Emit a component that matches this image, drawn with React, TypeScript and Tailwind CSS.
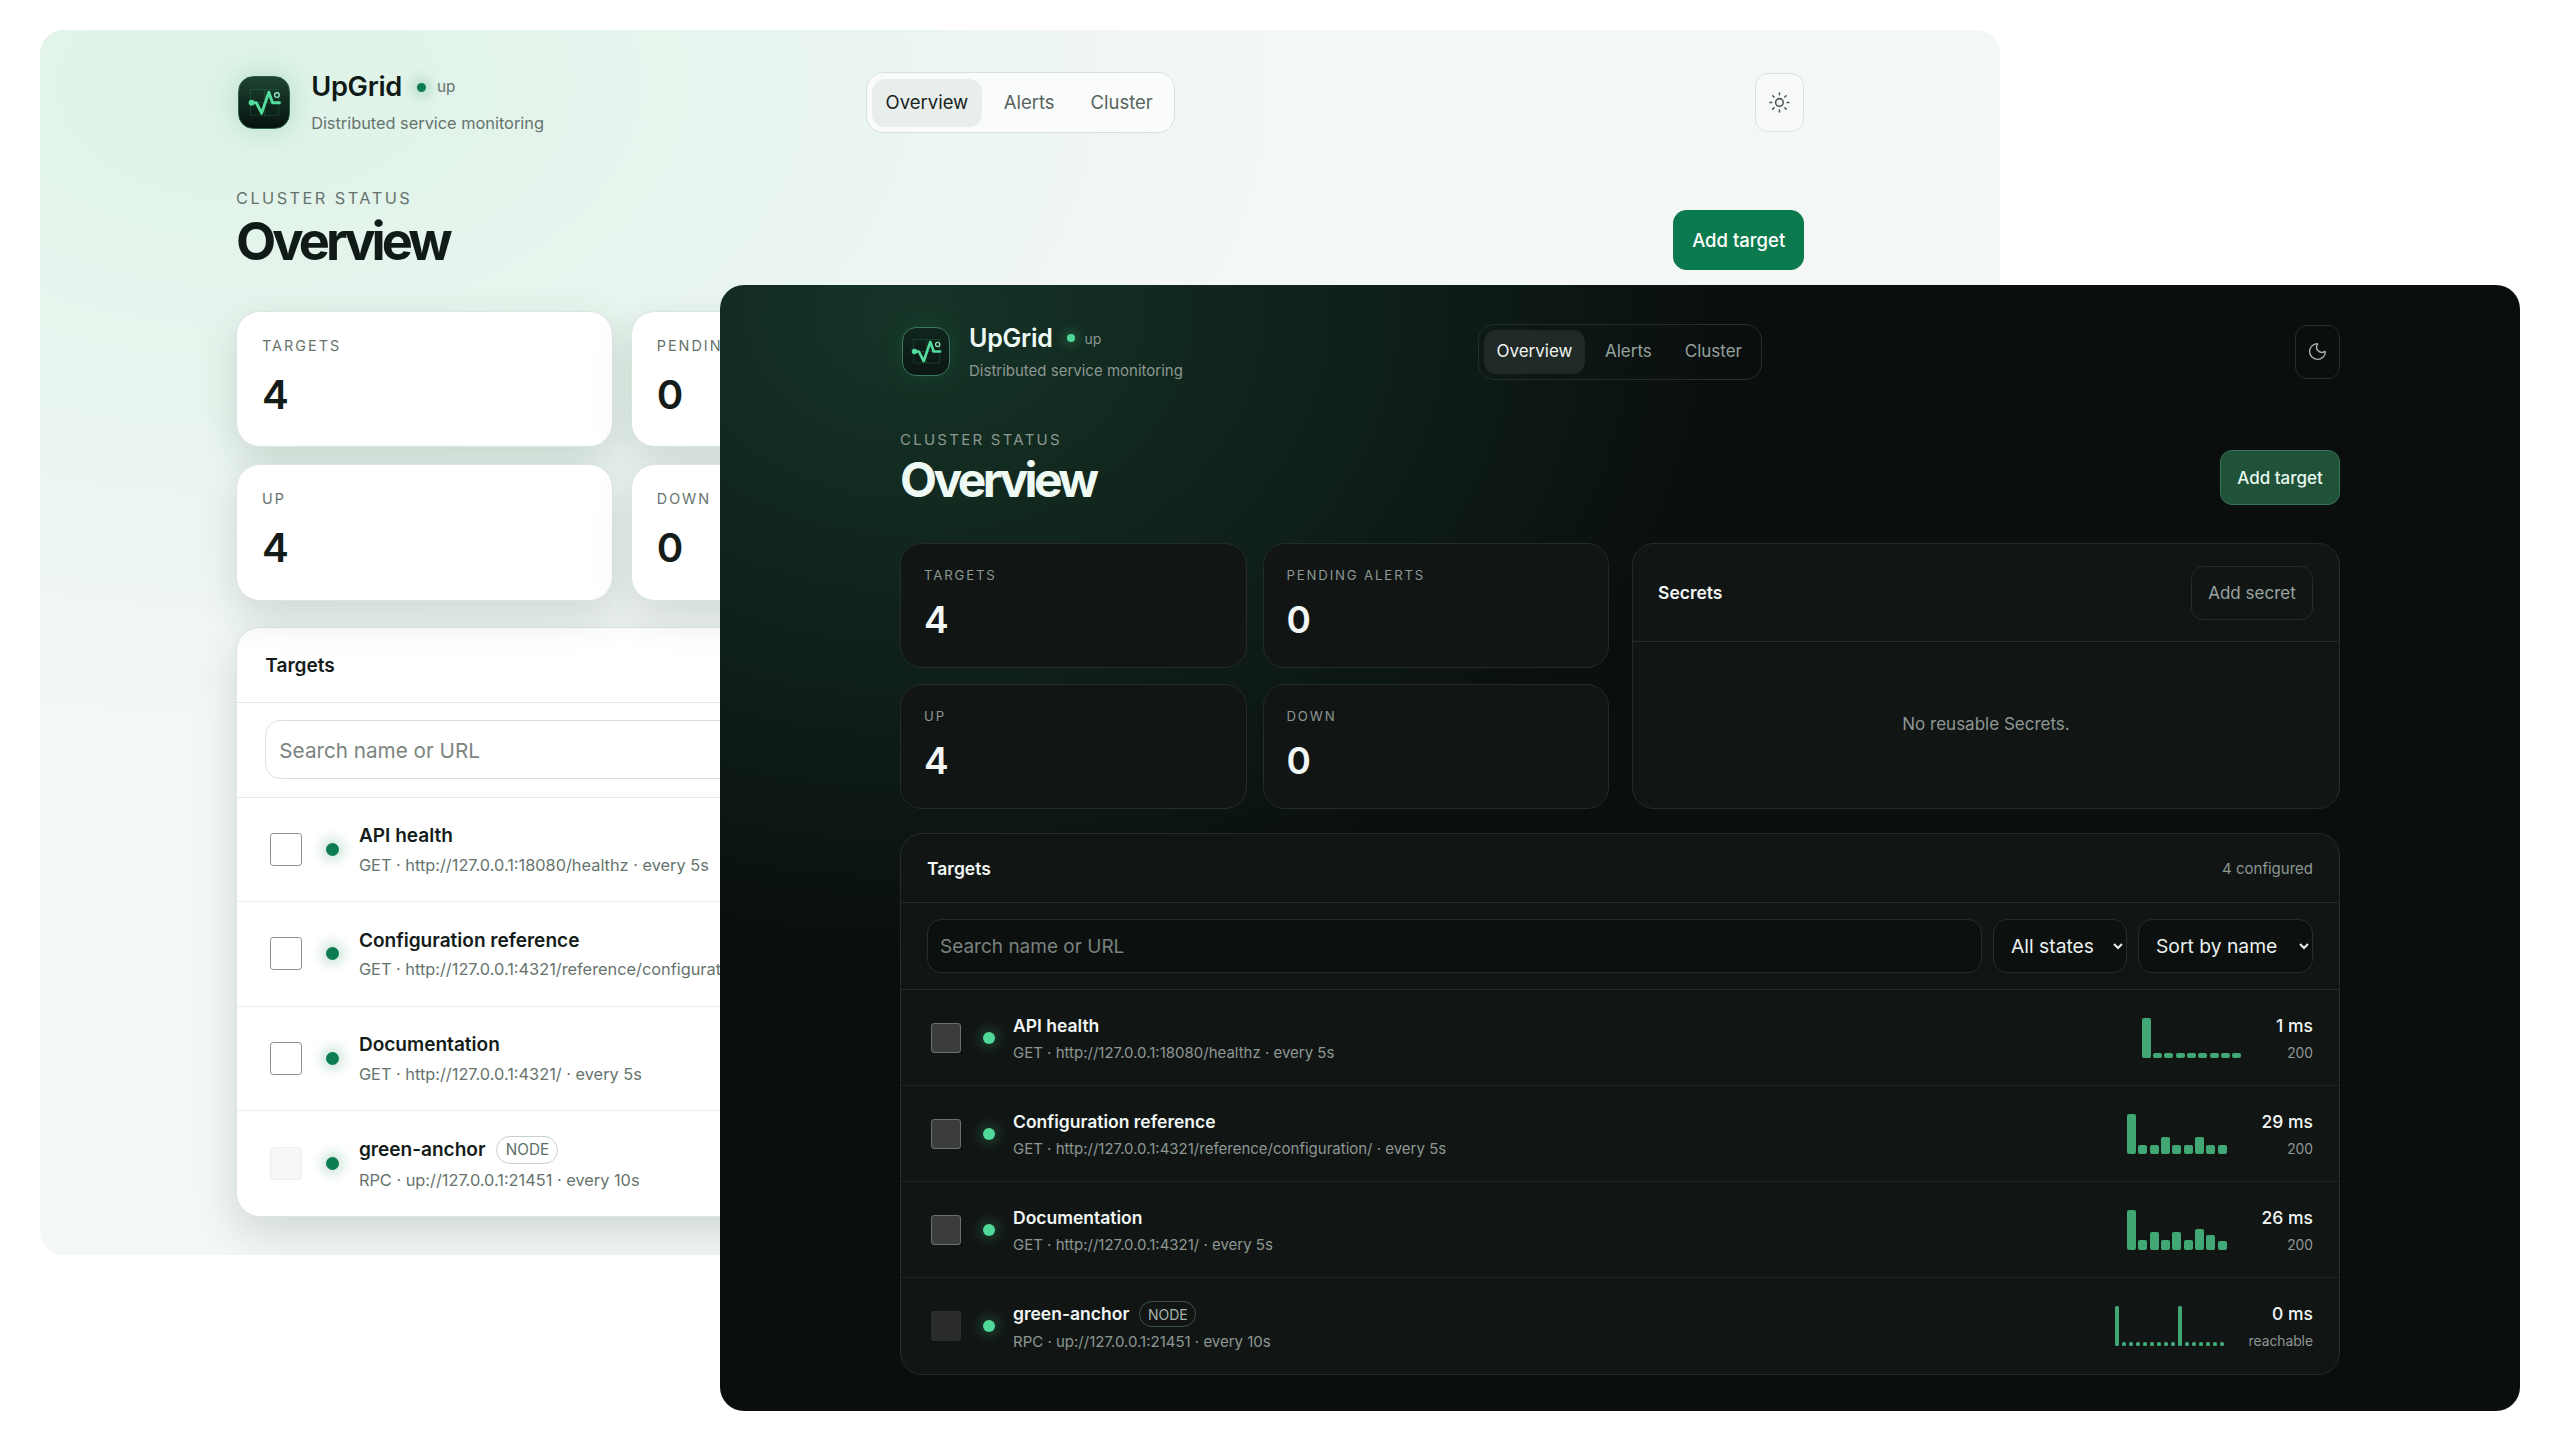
import { Moon, Sun } from "lucide-react";

type Mode = "light" | "dark";

const themes = {
  light: {
    shell: "bg-[#f3f7f5] bg-[radial-gradient(ellipse_940px_580px_at_190px_50px,#def3e8,transparent)]",
    logo: "border-[#2c5f49] bg-gradient-to-b from-[#1c4433] to-[#07130e] shadow-[0_0_26px_rgba(16,140,90,0.22)]",
    title: "text-[#101a16]",
    dot: "bg-[#0b7d50] shadow-[0_0_10px_5px_rgba(11,125,80,0.18)]",
    muted: "text-[#66736d]",
    eyebrow: "text-[#66736d]",
    nav: "border-[#d7e0dc] bg-white/70",
    navActive: "bg-[#e8eeeb] text-[#17211d]",
    navIdle: "text-[#57645e]",
    icon: "border-[#dbe2df] bg-white/40 text-[#4b5651]",
    primary: "border-[#0b7a4e] bg-[#0b7a4e] text-white",
    panel: "border-[#dde5e1] bg-white shadow-[0_14px_36px_rgba(30,60,48,0.16)]",
    line: "border-[#e2e9e6]",
    rowLine: "border-[#e9eeec]",
    strong: "text-[#141c19]",
    field: "border-[#d9e1dd] bg-white placeholder:text-[#7b8580] text-[#141c19]",
    select: "border-[#d9e1dd] bg-white text-[#141c19]",
    check: "border-[#8b8f8d] bg-white",
    checkOff: "border-[#eeeeee] bg-[#f7f7f7]",
    badge: "border-[#c4d2cb] text-[#5c6f66]",
    ghost: "border-[#dde5e1] text-[#57645e]",
    bar: "bg-[#0b7d50]",
  },
  dark: {
    shell: "bg-[#0a0f0e] bg-[radial-gradient(ellipse_820px_640px_at_190px_30px,#153427,transparent)]",
    logo: "border-[#3c7a5f] bg-gradient-to-b from-[#10261d] to-[#0b1613] shadow-[0_0_26px_rgba(60,200,140,0.12)]",
    title: "text-[#eef9f3]",
    dot: "bg-[#4fd898] shadow-[0_0_10px_5px_rgba(79,216,152,0.16)]",
    muted: "text-[#8d9793]",
    eyebrow: "text-[#8c9792]",
    nav: "border-[#262d2b] bg-transparent",
    navActive: "bg-[#212927] text-[#eef5f1]",
    navIdle: "text-[#97a19d]",
    icon: "border-[#262d2b] bg-transparent text-[#aab3af]",
    primary: "border-[#3c7058] bg-[#1f5239] text-[#e8f7ef]",
    panel: "border-[#252b2a] bg-[#111615]",
    line: "border-[#262c2b]",
    rowLine: "border-[#1f2524]",
    strong: "text-[#f2f6f4]",
    field: "border-[#262c2b] bg-[#0c1110] placeholder:text-[#79827e] text-[#f2f6f4]",
    select: "border-[#262c2b] bg-[#0c1110] text-[#eaf0ed] [color-scheme:dark]",
    check: "border-[#6d6f6e] bg-[#3b3c3c]",
    checkOff: "border-[#2f3130] bg-[#2b2c2c]",
    badge: "border-[#3b5449] text-[#a7b5ae]",
    ghost: "border-[#262c2b] text-[#9aa4a0]",
    bar: "bg-[#41a875]",
  },
};

const targets = [
  {
    name: "API health",
    sub: "GET · http://127.0.0.1:18080/healthz · every 5s",
    ms: "1 ms",
    status: "200",
    bars: [40, 5, 5, 5, 5, 5, 5, 5, 5],
  },
  {
    name: "Configuration reference",
    sub: "GET · http://127.0.0.1:4321/reference/configuration/ · every 5s",
    ms: "29 ms",
    status: "200",
    bars: [40, 9, 9, 17, 9, 9, 17, 9, 9],
  },
  {
    name: "Documentation",
    sub: "GET · http://127.0.0.1:4321/ · every 5s",
    ms: "26 ms",
    status: "200",
    bars: [40, 10, 18, 10, 18, 10, 21, 15, 9],
  },
  {
    name: "green-anchor",
    sub: "RPC · up://127.0.0.1:21451 · every 10s",
    ms: "0 ms",
    status: "reachable",
    node: true,
    bars: [40, 4, 4, 4, 4, 4, 4, 4, 4, 40, 4, 4, 4, 4, 4, 4],
  },
];

function Logo({ mode }: { mode: Mode }) {
  const t = themes[mode];
  return (
    <div className={`ml-[2px] h-[49px] w-[48px] shrink-0 overflow-hidden rounded-[14px] border ${t.logo}`}>
      <svg viewBox="0 0 48 48" className="h-full w-full" fill="none">
        <path d="M11 11.5H38M11 24H38M11 36H38M11 11.5V36M24.5 11.5V36M38 11.5V36" stroke="#4fd898" strokeOpacity="0.22" strokeWidth="0.8" />
        <path
          d="M12 24H16.5L21.6 34L28.5 14L32 24H38.7"
          stroke="#53dc9c"
          strokeWidth="2.8"
          strokeLinecap="round"
          strokeLinejoin="round"
        />
        <circle cx="12" cy="24" r="2.8" fill="#53dc9c" />
        <circle cx="36.2" cy="16.7" r="2.2" stroke="#8fe6bd" strokeWidth="1.3" />
      </svg>
    </div>
  );
}

function StatCard({ mode, label, value }: { mode: Mode; label: string; value: string }) {
  const t = themes[mode];
  return (
    <div className={`h-[125px] rounded-[22px] border px-[23px] pt-[22px] ${t.panel}`}>
      <div className={`text-[13.2px] leading-[18px] tracking-[0.14em] ${t.muted}`}>{label}</div>
      <div className={`mt-[14px] text-[37px] leading-[44px] font-semibold ${t.strong}`}>{value}</div>
    </div>
  );
}

function Spark({ mode, bars }: { mode: Mode; bars: number[] }) {
  const thin = bars.length > 9;
  const t = themes[mode];
  return (
    <div className={`flex h-[40px] items-end ${thin ? "gap-[3px]" : "gap-[2.3px]"}`}>
      {bars.map((h, i) => (
        <div
          key={i}
          className={`${thin ? "w-[4px] rounded-[1.5px]" : "w-[9px] rounded-[2px]"} ${t.bar}`}
          style={{ height: h }}
        />
      ))}
    </div>
  );
}

function Dashboard({ mode }: { mode: Mode }) {
  const t = themes[mode];
  return (
    <div className="px-[180px] pt-[38px] font-['Inter',sans-serif]">
      {/* header */}
      <div className="grid h-[56px] grid-cols-[1fr_auto_1fr] items-center">
        <div className="flex items-center gap-[19px]">
          <Logo mode={mode} />
          <div>
            <div className="flex items-center">
              <span className={`text-[25px] leading-[30px] font-semibold tracking-[-0.01em] ${t.title}`}>UpGrid</span>
              <span className={`ml-[14px] h-[8px] w-[8px] rounded-full ${t.dot}`} />
              <span className={`ml-[10px] text-[14px] ${t.muted}`}>up</span>
            </div>
            <div className={`mt-[9px] text-[15px] leading-[18px] ${t.muted}`}>Distributed service monitoring</div>
          </div>
        </div>
        <nav className={`flex h-[56px] items-center rounded-[16px] border p-[5px] pt-[6px] text-[17px] ${t.nav}`}>
          <span className={`flex h-[44px] w-[101px] items-center justify-center rounded-[12px] ${t.navActive}`}>Overview</span>
          <span className={`ml-[20px] ${t.navIdle}`}>Alerts</span>
          <span className={`ml-[33px] pr-[14px] ${t.navIdle}`}>Cluster</span>
        </nav>
        <button className={`flex h-[54px] w-[45px] items-center justify-center justify-self-end rounded-[12px] border ${t.icon}`}>
          {mode === "dark" ? <Moon size={21} strokeWidth={1.6} /> : <Sun size={21} strokeWidth={1.6} />}
        </button>
      </div>

      {/* title */}
      <div className="mt-[50px] flex items-end justify-between">
        <div className="pt-[1px]">
          <div className={`text-[15px] leading-[20px] tracking-[0.15em] ${t.eyebrow}`}>CLUSTER STATUS</div>
          <h1 className={`mt-[4px] text-[48px] leading-[51px] font-bold tracking-[-0.075em] ${t.title}`}>Overview</h1>
        </div>
        <button className={`h-[55px] w-[120px] rounded-[12px] border pt-[2px] text-[17px] font-medium ${t.primary}`}>Add target</button>
      </div>

      {/* stats + secrets */}
      <div className="mt-[38px] flex gap-[23px]">
        <div className="grid w-[709px] shrink-0 grid-cols-2 gap-x-[16px] gap-y-[16px]">
          <StatCard mode={mode} label="TARGETS" value="4" />
          <StatCard mode={mode} label="PENDING ALERTS" value="0" />
          <StatCard mode={mode} label="UP" value="4" />
          <StatCard mode={mode} label="DOWN" value="0" />
        </div>
        <div className={`flex min-w-0 flex-1 flex-col rounded-[22px] border ${t.panel}`}>
          <div className={`flex h-[98px] items-center justify-between border-b pl-[25px] pr-[26px] ${t.line}`}>
            <span className={`pt-[2px] text-[17.5px] font-semibold ${t.strong}`}>Secrets</span>
            <button className={`h-[54px] w-[122px] rounded-[12px] border pt-[2px] text-[17px] ${t.ghost}`}>Add secret</button>
          </div>
          <div className={`flex flex-1 items-center justify-center text-[17px] ${t.muted}`}>No reusable Secrets.</div>
        </div>
      </div>

      {/* targets */}
      <div className={`mt-[24px] rounded-[22px] border ${t.panel}`}>
        <div className={`flex h-[69px] items-center justify-between border-b pl-[26px] pr-[26px] ${t.line}`}>
          <span className={`pt-[2px] text-[17.5px] font-semibold ${t.strong}`}>Targets</span>
          <span className={`pt-[2px] text-[15px] ${t.muted}`}>4 configured</span>
        </div>
        <div className={`flex h-[87px] items-center gap-[11px] border-b px-[26px] ${t.line}`}>
          <input
            placeholder="Search name or URL"
            className={`h-[54px] min-w-0 flex-1 rounded-[14px] border px-[12px] pt-[1px] text-[19px] outline-none ${t.field}`}
          />
          <select className={`h-[54px] w-[134px] rounded-[14px] border pl-[13px] text-[19.3px] ${t.select}`}>
            <option>All states</option>
          </select>
          <select className={`h-[54px] w-[175px] rounded-[14px] border pl-[13px] text-[19.3px] ${t.select}`}>
            <option>Sort by name</option>
          </select>
        </div>
        {targets.map((row, i) => (
          <div
            key={row.name}
            className={`flex h-[96px] items-center pl-[30px] pr-[26px] ${i < targets.length - 1 ? `border-b ${t.rowLine}` : ""}`}
          >
            <input
              type="checkbox"
              className={`h-[30px] w-[30px] shrink-0 appearance-none rounded-[3px] border ${row.node ? t.checkOff : t.check}`}
            />
            <span className={`ml-[22px] h-[12px] w-[12px] shrink-0 rounded-full ${t.dot}`} />
            <div className="ml-[18px] min-w-0 flex-1 pt-[2px]">
              <div className="flex items-center">
                <span className={`text-[17.5px] leading-[24px] font-semibold ${t.strong}`}>{row.name}</span>
                {row.node && (
                  <span className={`ml-[10px] flex h-[26px] w-[57px] items-center justify-center rounded-full border text-[14px] ${t.badge}`}>
                    NODE
                  </span>
                )}
              </div>
              <div className={`mt-[4px] text-[15px] leading-[22px] ${t.muted}`}>{row.sub}</div>
            </div>
            <div className={`flex items-center ${row.node ? "gap-[24px]" : "gap-[35px]"}`}>
              <Spark mode={mode} bars={row.bars} />
              <div className="pt-[2px] text-right">
                <div className={`text-[17.5px] leading-[24px] font-medium ${t.strong}`}>{row.ms}</div>
                <div className={`mt-[4px] text-[13.8px] leading-[22px] ${t.muted}`}>{row.status}</div>
              </div>
            </div>
          </div>
        ))}
      </div>
    </div>
  );
}

export default function App() {
  return (
    <div className="relative h-[1440px] w-[2560px] overflow-hidden bg-white">
      {/* light window is the same page shot at a larger scale */}
      <div className="absolute left-[40px] top-[30px] h-[1225px] w-[1960px] overflow-hidden rounded-[24px]">
        <div className={`h-[1126px] w-[1800px] [zoom:1.0889] ${themes.light.shell}`}>
          <Dashboard mode="light" />
        </div>
      </div>
      <div className={`absolute left-[720px] top-[285px] h-[1126px] w-[1800px] overflow-hidden rounded-[24px] ${themes.dark.shell}`}>
        <Dashboard mode="dark" />
      </div>
    </div>
  );
}
